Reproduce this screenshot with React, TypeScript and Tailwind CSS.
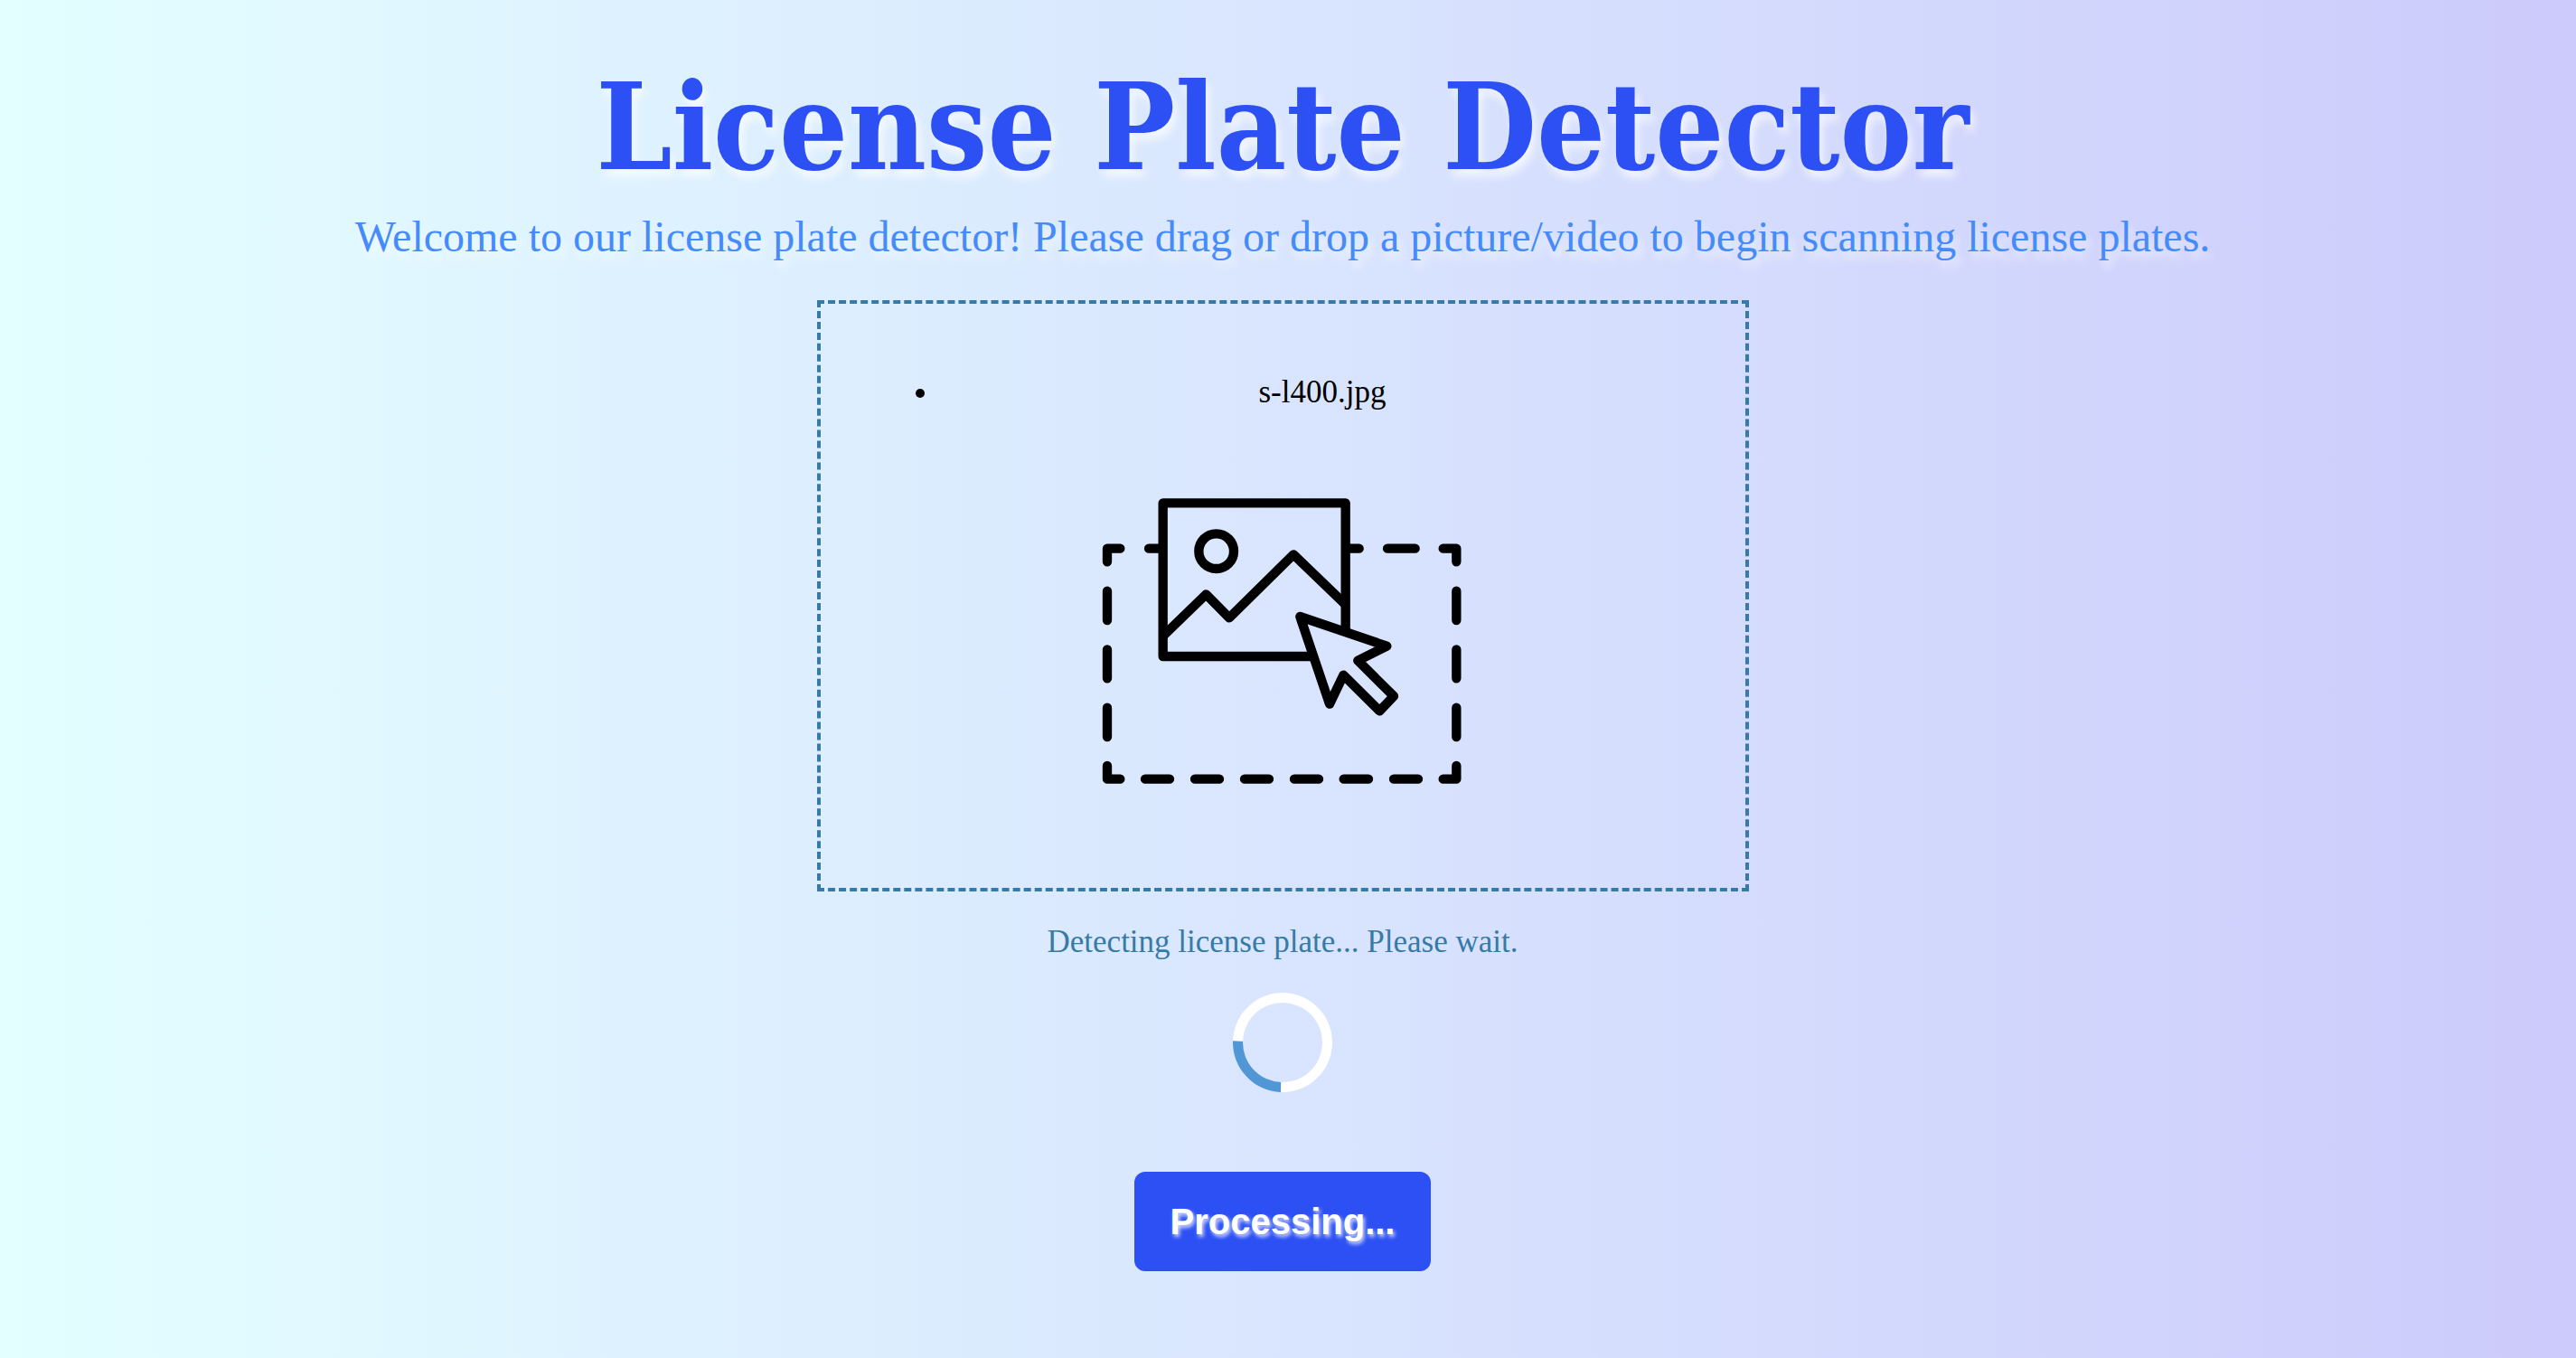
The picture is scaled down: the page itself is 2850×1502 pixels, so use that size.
function DropImageIcon() {
  return (
    <svg
      viewBox="0 0 1440 1140"
      className="h-auto w-[480px] max-w-full"
      fill="none"
      stroke="#000"
      strokeWidth="31"
      strokeLinecap="round"
      strokeLinejoin="round"
      aria-hidden="true"
    >
      {/* dashed drop target */}
      <path d="M138 304V260H181M276 260H320M934 260H974M1068 260H1160M1253 260H1297V304" />
      <path d="M138 401V498M138 595V691M138 788V885M1297 401V498M1297 595V691M1297 788V885" />
      <path d="M138 981V1025H181M264 1025H345M429 1025H510M594 1025H675M759 1025H840M923 1025H1005M1089 1025H1170M1253 1025H1297V981" />
      {/* picture */}
      <path d="M815 618H323V109H929V530" />
      <circle cx="500" cy="269" r="58" />
      <path d="M326 548L466 412L543 490L756 280L926 443" />
      {/* cursor */}
      <path d="M778 486L1066 584L970 632L1089 750L1042 799L922 680L876 776Z" />
    </svg>
  );
}

function Spinner() {
  return (
    <div
      role="status"
      aria-label="Loading"
      className="size-[110px] rotate-[47deg] rounded-full border-[11px] border-white border-b-[#5196d5]"
    />
  );
}

export default function App() {
  const files = ['s-l400.jpg'];

  return (
    <main className="flex min-h-screen flex-col items-center bg-linear-to-r from-[#e3ffff] via-[#d9e5fe] to-[#cccbfb] pt-14 pr-3 pb-24 text-center font-['Liberation_Serif',serif]">
      <h1 className="font-[Georgia,'DejaVu_Serif_Condensed',serif] text-[133px] leading-[168px] font-bold text-[#2d50f5] [text-shadow:4px_8px_10px_#ffffffb3]">
        License Plate Detector
      </h1>
      <p className="font-[Georgia,'Liberation_Serif',serif] text-[48px] leading-[76px] text-[#468bfa] [text-shadow:4px_8px_10px_#ffffffb3]">
        Welcome to our license plate detector! Please drag or drop a picture/video to begin scanning license plates.
      </p>

      <section className="mt-8 flex w-full max-w-[1031px] flex-col items-center border-4 border-dashed border-[#367ba6] pt-[78px] pb-[82px]">
        <ul className="mb-[66px] w-full list-disc pr-11 pl-33 text-[35px] leading-10 text-black">
          {files.map((file) => (
            <li key={file}>{file}</li>
          ))}
        </ul>
        <DropImageIcon />
      </section>

      <p className="my-9 text-[35px] leading-10 text-[#367ba6]">Detecting license plate... Please wait.</p>
      <Spinner />
      <button
        type="button"
        className="mt-22 rounded-xl bg-[#2d50f5] px-10 py-8 font-['Liberation_Sans',sans-serif] text-[40px] leading-[46px] font-bold text-white [text-shadow:2px_3px_4px_#ffffffcc]"
      >
        Processing...
      </button>
    </main>
  );
}
